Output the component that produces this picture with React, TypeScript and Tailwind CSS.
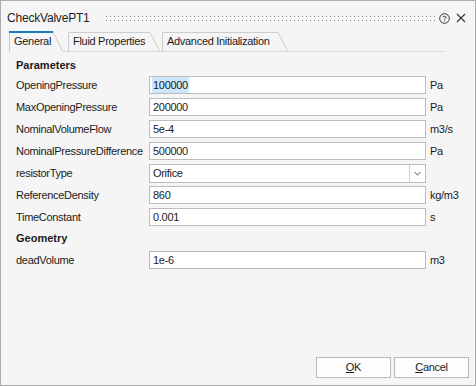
import React from "react";

const rows: { label: string; value: string; unit: string; combo?: boolean; selected?: boolean }[] = [
  { label: "OpeningPressure", value: "100000", unit: "Pa", selected: true },
  { label: "MaxOpeningPressure", value: "200000", unit: "Pa" },
  { label: "NominalVolumeFlow", value: "5e-4", unit: "m3/s" },
  { label: "NominalPressureDifference", value: "500000", unit: "Pa" },
  { label: "resistorType", value: "Orifice", unit: "", combo: true },
  { label: "ReferenceDensity", value: "860", unit: "kg/m3" },
  { label: "TimeConstant", value: "0.001", unit: "s" },
];

function Tab({ label, active, w }: { label: string; active?: boolean; w: number }) {
  const h = active ? 21 : 19;
  return (
    <div className={`relative flex items-center pl-[5px] ${active ? "h-[21px] -mb-px z-10" : "h-[19px]"}`} style={{ width: w }}>
      <svg className="absolute inset-0" width={w} height={h}>
        <path d={`M0.5 ${h} V0.5 H${w - 10} L${w - 0.5} ${h} Z`} fill="#f5f5f5" stroke="none" />
        <path d={`M0.5 ${h} V0.5 H${w - 10} L${w - 0.5} ${h - (active ? 1 : 0)}`} fill="none" stroke="#cdcdcd" />
        {active && <path d={`M0 1 H${w - 10}`} stroke="#1b79c2" strokeWidth={2} />}
      </svg>
      <span className="relative">{label}</span>
    </div>
  );
}

export default function App() {
  return (
    <div className="w-[476px] h-[386px] bg-[#f5f5f5] border border-[#adadad] flex flex-col text-[11px] tracking-[-0.3px] text-[#1b1b1b] font-['Liberation_Sans',Arial,sans-serif]">
      {/* title bar */}
      <div className="h-[30px] flex items-center pl-[6px] pr-[9px] pt-[4px]">
        <span className="text-[12px] tracking-[-0.2px] text-[#1e1e1e]">CheckValvePT1</span>
        <svg className="ml-[16px] mt-[1px]" width="330" height="6">
          <defs>
            <pattern id="dots" width="4" height="4" patternUnits="userSpaceOnUse">
              <rect x="0" y="0" width="1" height="1" fill="#8c8c8c" />
            </pattern>
          </defs>
          <rect width="330" height="6" fill="url(#dots)" />
        </svg>
        <div className="ml-auto flex items-center gap-[6px]">
          <svg width="11" height="11" viewBox="0 0 11 11">
            <circle cx="5.5" cy="5.5" r="4.8" fill="none" stroke="#333" strokeWidth="1" />
            <path d="M3.9 4.3 C3.9 2.9 7.1 2.9 7.1 4.3 C7.1 5.3 5.5 5.4 5.5 6.5" fill="none" stroke="#333" strokeWidth="1" />
            <rect x="5" y="7.4" width="1" height="1" fill="#333" />
          </svg>
          <svg width="10" height="10" viewBox="0 0 10 10">
            <path d="M1 1 L9 9 M9 1 L1 9" stroke="#333" strokeWidth="1.1" />
          </svg>
        </div>
      </div>

      {/* tabs */}
      <div className="ml-[8px] w-[436px] h-[21px] flex items-end border-b border-[#d9d9d9]">
        <Tab label="General" active w={54} />
        <div className="ml-[5px]">
          <Tab label="Fluid Properties" w={92} />
        </div>
        <div className="ml-[2px]">
          <Tab label="Advanced Initialization" w={126} />
        </div>
      </div>

      {/* parameters */}
      <div className="pl-[15px] pt-[4px] flex flex-col">
        <div className="h-[18px] flex items-center font-bold tracking-normal">Parameters</div>
        {rows.map((r) => (
          <div key={r.label} className="h-[22px] flex items-center">
            <div className="w-[133px] shrink-0">{r.label}</div>
            {r.combo ? (
              <div className="w-[277px] h-[19px] bg-white border border-[#bcbcbc] flex items-center">
                <span className="pl-[3px] flex-1">{r.value}</span>
                <div className="w-[16px] h-full border-l border-[#cfcfcf] flex items-center justify-center">
                  <svg width="7" height="5" viewBox="0 0 7 5">
                    <path d="M0.5 1 L3.5 4 L6.5 1" fill="none" stroke="#9a9a9a" strokeWidth="1.2" />
                  </svg>
                </div>
              </div>
            ) : (
              <div className="w-[277px] h-[18px] bg-white border border-[#bcbcbc] flex items-center pl-[2px]">
                <span className={r.selected ? "bg-[#cce8ff] px-[1px]" : "px-[1px]"}>{r.value}</span>
              </div>
            )}
            <span className="ml-[4px]">{r.unit}</span>
          </div>
        ))}
        <div className="h-[21px] flex items-center font-bold tracking-normal">Geometry</div>
        <div className="h-[22px] flex items-center">
          <div className="w-[133px] shrink-0">deadVolume</div>
          <div className="w-[277px] h-[18px] bg-white border border-[#bcbcbc] flex items-center pl-[2px]">
            <span className="px-[1px]">1e-6</span>
          </div>
          <span className="ml-[4px]">m3</span>
        </div>
      </div>

      {/* buttons */}
      <div className="mt-auto mb-[7px] mr-[6px] flex justify-end gap-[3px]">
        <button className="w-[75px] h-[21px] bg-[#fdfdfd] border border-[#b9b9b9] flex items-center justify-center">
          <span><span className="underline">O</span>K</span>
        </button>
        <button className="w-[75px] h-[21px] bg-[#fdfdfd] border border-[#b9b9b9] flex items-center justify-center">
          <span><span className="underline">C</span>ancel</span>
        </button>
      </div>
    </div>
  );
}
